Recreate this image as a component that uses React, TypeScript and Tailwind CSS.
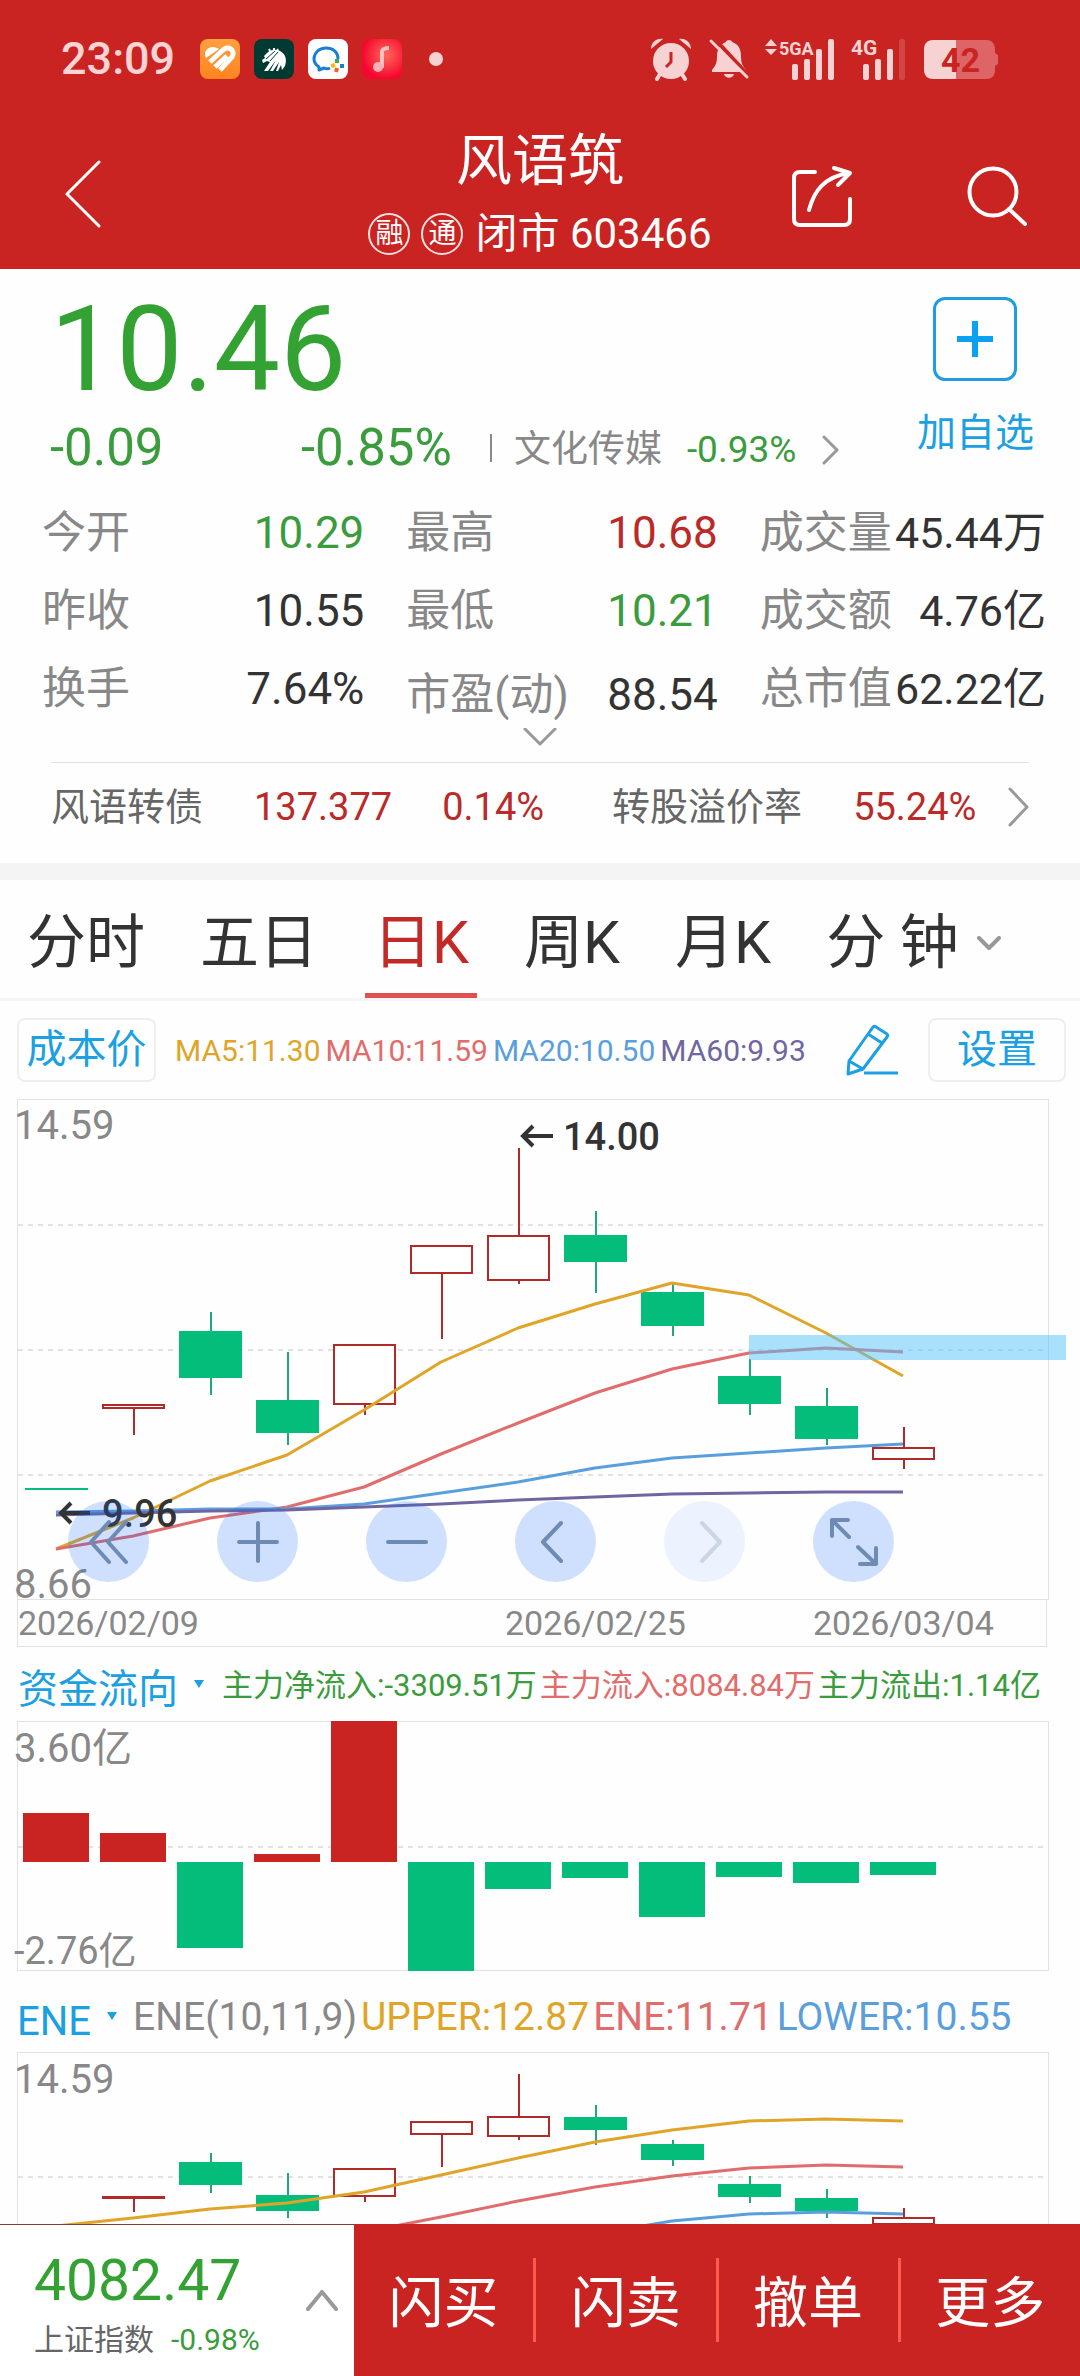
import type { ReactNode } from 'react';

const RED = '#c92322';
const GREEN = '#04bd7a';
const CANDLE_RED = '#b02a2a';

type Candle = { top: number; bottom: number; high?: number; low?: number; up?: boolean };
type Series = { color: string; points: number[] };

// Every candle takes a 77px slot, the first one is centred at 56
const slotX = (i: number) => 56 + i * 77;

const dayCandles: Candle[] = [
  { top: 389, bottom: 391 },
  { top: 306, bottom: 309, low: 336, up: true },
  { top: 232, bottom: 279, high: 213, low: 296 },
  { top: 301, bottom: 334, high: 253, low: 346 },
  { top: 246, bottom: 305, low: 316, up: true },
  { top: 147, bottom: 174, low: 240, up: true },
  { top: 137, bottom: 181, high: 49, low: 185, up: true },
  { top: 136, bottom: 163, high: 112, low: 194 },
  { top: 193, bottom: 227, high: 185, low: 237 },
  { top: 277, bottom: 305, high: 260, low: 316 },
  { top: 307, bottom: 340, high: 289, low: 346 },
  { top: 349, bottom: 360, high: 328, low: 370, up: true },
];

const dayLines: Series[] = [
  { color: '#e0a528', points: [450, 419, 382, 356, 311, 263, 229, 205, 184, 196, 234, 277] },
  { color: '#e16c6c', points: [450, 437, 419, 408, 388, 355, 324, 294, 270, 254, 249, 253] },
  { color: '#5a9fdc', points: [413, 412, 410, 410, 405, 394, 383, 369, 359, 354, 349, 345] },
  { color: '#70659f', points: [416, 414, 412, 411, 408, 405, 401, 398, 395, 394, 393, 393] },
];

const eneCandles: Candle[] = [
  { top: 186, bottom: 188 },
  { top: 145, bottom: 146, low: 160, up: true },
  { top: 110, bottom: 133, high: 101, low: 141 },
  { top: 143, bottom: 159, high: 121, low: 166 },
  { top: 117, bottom: 144, low: 150, up: true },
  { top: 70, bottom: 82, low: 115, up: true },
  { top: 65, bottom: 84, high: 22, low: 88, up: true },
  { top: 65, bottom: 78, high: 53, low: 93 },
  { top: 92, bottom: 108, high: 88, low: 114 },
  { top: 132, bottom: 145, high: 124, low: 151 },
  { top: 146, bottom: 159, high: 137, low: 166 },
  { top: 166, bottom: 172, high: 156, low: 177, up: true },
];

const eneLines: Series[] = [
  { color: '#e0a528', points: [174, 166, 157, 151, 140, 123, 106, 90, 78, 69, 67, 69] },
  { color: '#e16c6c', points: [236, 222, 208, 194, 180, 165, 149, 135, 124, 116, 113, 115] },
  { color: '#5a9fdc', points: [244, 240, 236, 230, 222, 210, 196, 182, 169, 162, 160, 162] },
];

// y of the free end of each bar, the zero line is at 141
const FLOW_ZERO = 141;
const flowBars = [92, 112, 227, 133, 0, 250, 168, 157, 196, 156, 162, 154];

const quotes = [
  { label: '今开', value: '10.29', color: 'text-[#3a9c3c]' },
  { label: '最高', value: '10.68', color: 'text-[#b92a28]' },
  { label: '成交量', value: '45.44万', color: 'text-[#333333]' },
  { label: '昨收', value: '10.55', color: 'text-[#333333]' },
  { label: '最低', value: '10.21', color: 'text-[#3a9c3c]' },
  { label: '成交额', value: '4.76亿', color: 'text-[#333333]' },
  { label: '换手', value: '7.64%', color: 'text-[#333333]' },
  { label: '市盈(动)', value: '88.54', color: 'text-[#333333]' },
  { label: '总市值', value: '62.22亿', color: 'text-[#333333]' },
];

const tabs = ['分时', '五日', '日K', '周K', '月K'];

function Chevron({ className, d, viewBox, width = 3 }: { className: string; d: string; viewBox: string; width?: number }) {
  return (
    <svg className={className} viewBox={viewBox} fill="none" stroke="currentColor" strokeWidth={width} strokeLinecap="round" strokeLinejoin="round">
      <path d={d} />
    </svg>
  );
}

function AppBadges() {
  return (
    <div className="flex items-center gap-[14px]">
      <svg className="size-10" viewBox="0 0 40 40">
        <defs>
          <linearGradient id="orange" x1="0" y1="0" x2="0" y2="1">
            <stop offset="0" stopColor="#ffa040" />
            <stop offset="1" stopColor="#ff8420" />
          </linearGradient>
        </defs>
        <rect width="40" height="40" rx="8" fill="url(#orange)" />
        <path d="M6 19c-3-6 1-11 7-11 2 0 4 1 6 2z" fill="#fff" />
        <path d="M10 23 23 11c5-5 13 0 9 7L20 31" fill="none" stroke="#fff" strokeWidth="5" />
        <path d="M15 28 27 17" stroke="#fff" strokeWidth="5" />
      </svg>
      <svg className="size-10" viewBox="0 0 40 40">
        <rect width="40" height="40" rx="8" fill="#003a33" />
        <path d="M13 14c4-4 9-4 13-2 6 3 7 9 5 15l-3 4-1-5-3 6h-2l3-9-6 9h-3l6-11-8 11H10l6-9-3-1-4 2-1-3 3-2-1-2z" fill="#fff" />
        <path d="M15 10l1 2M20 9v3M24 10l-1 2" stroke="#fff" strokeWidth="2" />
        <path d="M12 20l9-8M16 22l8-9" stroke="#003a33" />
      </svg>
      <svg className="size-10" viewBox="0 0 40 40" fill="none">
        <rect width="40" height="40" rx="8" fill="#fff" />
        <path d="M30 20c0-7-5-11-12-11S6 14 6 20c0 3 2 6 5 8v3l5-2c2 1 4 1 6 0" stroke="#1a7fd4" strokeWidth="3" strokeLinejoin="round" />
        <path d="M29 20v4" stroke="#3cb034" strokeWidth="4" />
        <path d="M23 27l4-1" stroke="#fbb80f" strokeWidth="4" />
        <path d="M28 33l1-4" stroke="#f0602b" strokeWidth="4" />
        <path d="M32 27h4" stroke="#1a7fd4" strokeWidth="4" />
      </svg>
      <svg className="size-10" viewBox="0 0 40 40">
        <defs>
          <radialGradient id="music" cx="0.6" cy="0.4" r="0.6">
            <stop offset="0" stopColor="#ff6a5a" />
            <stop offset="1" stopColor="#f5062f" />
          </radialGradient>
        </defs>
        <rect width="40" height="40" rx="8" fill="url(#music)" />
        <path d="M20 29V13c0-3 3-4 7-4" fill="none" stroke="#ffc0c0" strokeWidth="4" />
        <circle cx="16" cy="28" r="5" fill="#ffb0b4" />
      </svg>
    </div>
  );
}

function StatusIcons() {
  return (
    <svg className="h-[44px] w-[350px]" viewBox="650 37 350 44" fill="#f6d2d3">
      {/* alarm */}
      <circle cx="671" cy="61" r="18" />
      <path d="M651 49c0-6 5-11 12-10zM691 49c0-6-5-11-12-10z" />
      <path d="M660 74l-3 5M682 74l3 5" stroke="#f6d2d3" strokeWidth="4" strokeLinecap="round" />
      <path d="M671 52v10l-5 5" fill="none" stroke={RED} strokeWidth="3" />
      {/* muted bell */}
      <path d="M729 40c2 0 3 1 3 2 7 2 9 8 9 14 0 8 2 10 5 14v2h-34v-2c3-4 5-6 5-14 0-6 3-12 9-14 0-1 1-2 3-2zM724 74h10c-1 5-9 5-10 0z" />
      <path d="M712 36l37 40" stroke={RED} strokeWidth="4" />
      <path d="M711 41l36 36" stroke="#f6d2d3" strokeWidth="3" strokeLinecap="round" />
      {/* first sim */}
      <path d="M765 46l6-7 6 7zM765 49l6 6 6-6z" />
      <text x="779" y="55" fontSize="18" fontWeight="700">5GA</text>
      <rect x="792" y="64" width="6" height="16" rx="2" />
      <rect x="804" y="59" width="6" height="21" rx="2" />
      <rect x="816" y="49" width="6" height="31" rx="2" />
      <rect x="828" y="39" width="6" height="41" rx="2" />
      {/* second sim */}
      <text x="851" y="55" fontSize="21" fontWeight="700">4G</text>
      <rect x="863" y="64" width="6" height="16" rx="2" />
      <rect x="875" y="59" width="6" height="21" rx="2" />
      <rect x="887" y="49" width="6" height="31" rx="2" />
      <rect x="899" y="39" width="6" height="41" rx="2" opacity="0.2" />
      {/* battery */}
      <path d="M956 40h31c5 0 8 4 8 9v4l3 2v9l-3 2v4c0 5-3 9-8 9h-31z" fill="#de6566" />
      <path d="M956 40h-23c-6 0-9 4-9 9v21c0 5 3 9 9 9h23z" />
      <text x="941" y="72" fontSize="34" fontWeight="700" fill={RED}>42</text>
    </svg>
  );
}

function Header() {
  return (
    <header className="bg-[#c92322] text-white">
      <div className="flex h-[118px] items-center pr-[80px] pl-[61px]">
        <span className="w-[139px] text-[45px] font-medium text-[#fdd3d3]">23:09</span>
        <AppBadges />
        <span className="ml-[27px] size-[14px] rounded-full bg-[#f6d2d3]" />
        <div className="ml-auto">
          <StatusIcons />
        </div>
      </div>
      <div className="grid h-[151px] grid-cols-[1fr_auto_1fr] items-center">
        <button type="button" aria-label="返回" className="ml-[64px] w-[38px]">
          <Chevron className="h-[68px] w-[38px]" viewBox="0 0 38 68" d="M35 2 3 34l32 32" />
        </button>
        <div className="pt-1 text-center">
          <h1 className="text-[56px] leading-[76px]">风语筑</h1>
          <div className="flex h-[70px] items-center justify-center text-[42px]">
            <span className="flex size-[42px] items-center justify-center rounded-full border-2 border-[#fbe0e0] text-[28px]">融</span>
            <span className="mr-3 ml-[11px] flex size-[42px] items-center justify-center rounded-full border-2 border-[#fbe0e0] text-[28px]">通</span>
            <span>闭市 603466</span>
          </div>
        </div>
        <div className="flex items-center justify-end gap-[114px] pt-1 pr-[53px]">
          <button type="button" aria-label="分享">
            <svg className="size-[62px]" viewBox="0 0 62 62" fill="none" stroke="currentColor" strokeWidth="4" strokeLinecap="round" strokeLinejoin="round">
              <path d="M24 7H9C5 7 3 9 3 13v41c0 4 2 6 6 6h44c4 0 6-2 6-6V34" />
              <path d="M18 45C23 26 33 12 58 8M43 3l16 5-12 12" />
            </svg>
          </button>
          <button type="button" aria-label="搜索">
            <svg className="size-[60px]" viewBox="0 0 60 60" fill="none" stroke="currentColor" strokeWidth="4" strokeLinecap="round">
              <circle cx="26" cy="26" r="23.5" />
              <path d="M42 43l16 15" />
            </svg>
          </button>
        </div>
      </div>
    </header>
  );
}

function QuotePanel() {
  return (
    <section>
      <div className="flex justify-between">
        <div className="pt-[22px] pl-[50px]">
          <div className="text-[118px] leading-[118px] text-[#33a233]">10.46</div>
          <div className="flex h-[78px] items-center text-[51px] text-[#3a9c3c]">
            <span className="w-[251px]">-0.09</span>
            <span>-0.85%</span>
            <span className="ml-[38px] h-7 w-[2px] bg-[#888888]" />
            <a href="#sector" className="ml-[22px] flex items-center pt-1 text-[37px]">
              <span className="text-[#888888]">文化传媒</span>
              <span className="ml-[25px]">-0.93%</span>
              <Chevron className="ml-[26px] h-[30px] w-[18px] text-[#999999]" viewBox="0 0 18 30" d="M2 2l13 13L2 28" />
            </a>
          </div>
        </div>
        <button type="button" className="mt-7 mr-[46px] flex flex-col items-center self-start text-[39px] text-[#1ba0e2]">
          <span className="flex size-[84px] items-center justify-center rounded-xl border-[3px] border-[#1f9ddd]">
            <svg className="size-9" viewBox="0 0 36 36" stroke="#0aa2f0" strokeWidth="6">
              <path d="M18 0v36M0 18h36" />
            </svg>
          </span>
          <span className="mt-[27px] leading-[50px]">加自选</span>
        </button>
      </div>

      <dl className="mt-[7px] grid grid-cols-[322fr_311fr_286fr] gap-x-[42px] pr-[34px] pl-[42px] text-[44px]">
        {quotes.map((q, i) => (
          <div key={q.label} className={`flex h-[78px] items-center justify-between whitespace-nowrap ${i === 7 ? 'pt-3' : ''}`}>
            <dt className="text-[#888888]">{q.label}</dt>
            <dd className={`${q.color} ${i % 3 === 2 ? 'text-[43px]' : ''}`}>{q.value}</dd>
          </div>
        ))}
      </dl>
      <button type="button" aria-label="展开" className="mx-auto block text-[#999999]">
        <Chevron className="h-[18px] w-[34px]" viewBox="0 0 34 18" d="M2 1l15 15L32 1" />
      </button>

      <div className="mx-[51px] mt-4 border-t border-[#e2e2e2] pb-3">
        <a href="#bond" className="flex h-[88px] items-center text-[38px] whitespace-nowrap text-[#b92a28]">
          <span className="text-[#666666]">风语转债</span>
          <span className="ml-[51px]">137.377</span>
          <span className="ml-[50px]">0.14%</span>
          <span className="ml-[68px] text-[#666666]">转股溢价率</span>
          <span className="ml-[51px]">55.24%</span>
          <Chevron className="ml-auto h-[40px] w-[21px] text-[#999999]" viewBox="0 0 21 40" d="M2 2l17 18L2 38" />
        </a>
      </div>
    </section>
  );
}

function PeriodTabs() {
  return (
    <nav className="flex h-[121px] gap-[55px] border-b-[3px] border-[#f4f4f4] pl-[27px] text-[59px] text-[#333333]">
      {tabs.map((tab) => (
        <button
          key={tab}
          type="button"
          className={`relative h-full pt-2 ${tab === '日K' ? 'text-[#c22a28]' : ''}`}
        >
          {tab}
          {tab === '日K' && <span className="absolute -inset-x-2 bottom-0 h-[5px] bg-[#e05050]" />}
        </button>
      ))}
      <button type="button" className="flex h-full items-center pt-2">
        分 钟
        <Chevron className="ml-[18px] h-[14px] w-6 text-[#999999]" viewBox="0 0 24 14" d="M2 2l10 10L22 2" width={4} />
      </button>
    </nav>
  );
}

function ChartToolbar() {
  return (
    <div className="flex h-[98px] items-center pr-[14px] pl-[17px] text-[30px] whitespace-nowrap">
      <button type="button" className="h-16 w-[139px] rounded-lg border-2 border-[#eeeeee] text-[40px] text-[#1ba0e2]">成本价</button>
      <div className="ml-[19px] flex gap-[5px]">
        <span className="text-[#e0a528]">MA5:11.30</span>
        <span className="text-[#e16c6c]">MA10:11.59</span>
        <span className="text-[#5a9fdc]">MA20:10.50</span>
        <span className="text-[#70659f]">MA60:9.93</span>
      </div>
      <button type="button" aria-label="画线" className="mr-[30px] ml-auto">
        <svg className="size-[52px]" viewBox="0 0 52 52" fill="none" stroke="#1ba0e2" strokeWidth="3" strokeLinejoin="round">
          <path d="M2 50l1-13L27 3c1-1 2-1 3 0l11 7c1 1 1 2 0 3L17 45z" />
          <path d="M22 10l14 9M3 37l14 8" />
          <path d="M18 49h34" />
        </svg>
      </button>
      <button type="button" className="h-16 w-[138px] rounded-lg border-2 border-[#eeeeee] text-[40px] text-[#1ba0e2]">设置</button>
    </div>
  );
}

function Frame({ height, grid }: { height: number; grid: number[] }) {
  return (
    <g fill="none" stroke="#e2e2e2">
      <rect x="17.5" y="0.5" width="1031" height={height - 1} />
      {grid.map((y) => (
        <path key={y} d={`M18 ${y}H1048`} strokeWidth="2" strokeDasharray="5 5" />
      ))}
    </g>
  );
}

function Candles({ data }: { data: Candle[] }) {
  return (
    <g strokeWidth="2">
      {data.map((c, i) => {
        const x = slotX(i);
        const color = c.up ? CANDLE_RED : '#1fa878';
        return (
          <g key={i} stroke={color}>
            {c.high !== undefined && <path d={`M${x + 1} ${c.high}V${c.top}`} />}
            {c.low !== undefined && <path d={`M${x + 1} ${c.bottom}V${c.low}`} />}
            {c.up ? (
              <rect x={x - 30} y={c.top} width="61" height={c.bottom - c.top} fill="#fff" />
            ) : (
              <rect x={x - 31} y={c.top} width="63" height={c.bottom - c.top} fill={GREEN} stroke="none" />
            )}
          </g>
        );
      })}
    </g>
  );
}

function Lines({ data }: { data: Series[] }) {
  return (
    <g fill="none" strokeWidth="3" strokeLinejoin="round">
      {data.map((s) => (
        <polyline key={s.color} stroke={s.color} points={s.points.map((y, i) => `${slotX(i)},${y}`).join(' ')} />
      ))}
    </g>
  );
}

function RoundButton({ label, disabled, children }: { label: string; disabled?: boolean; children: ReactNode }) {
  return (
    <button
      type="button"
      aria-label={label}
      disabled={disabled}
      className="flex size-[81px] items-center justify-center rounded-full bg-[#0f69ff]/20 disabled:opacity-35"
    >
      <svg className="size-[50px]" viewBox="0 0 50 50" fill="none" stroke="#6d8bb3" strokeWidth="4" strokeLinecap="round" strokeLinejoin="round">
        {children}
      </svg>
    </button>
  );
}

function DayChart() {
  return (
    <div className="relative">
      <svg className="block w-full" viewBox="0 0 1080 501">
        <Frame height={501} grid={[126, 251, 376]} />
        <g fill="#888888" fontSize="40">
          <text x="14" y="40">14.59</text>
          <text x="14" y="499">8.66</text>
        </g>
        <Candles data={dayCandles} />
        <Lines data={dayLines} />
        <rect x="749" y="236" width="317" height="25" fill="#53c3fb" fillOpacity="0.5" />
        <g fill="#333333" fontSize="38" fontWeight="500">
          <text x="563" y="51">14.00</text>
          <text x="102" y="428">9.96</text>
        </g>
        <path d="M553 37h-30m10-10-10 10 10 10M90 414H61m10-10-10 10 10 10" fill="none" stroke="#333333" strokeWidth="4" />
      </svg>
      <div className="absolute bottom-[18px] left-[68px] flex gap-[68px]">
        <RoundButton label="最早">
          <path d="M25 5 7 25l18 20M42 5 24 25l18 20" />
        </RoundButton>
        <RoundButton label="放大">
          <path d="M25 6v38M6 25h38" />
        </RoundButton>
        <RoundButton label="缩小">
          <path d="M6 25h38" />
        </RoundButton>
        <RoundButton label="向左">
          <path d="M30 6 12 25l18 19" />
        </RoundButton>
        <RoundButton label="向右" disabled>
          <path d="M22 6l18 19-18 19" />
        </RoundButton>
        <RoundButton label="全屏">
          <path d="M20 20 3 3m0 16V3h16M29 30l18 17M47 31v16H31" />
        </RoundButton>
      </div>
    </div>
  );
}

function IndicatorButton({ name }: { name: string }) {
  return (
    <button type="button" className="flex items-center pt-2 text-[40px] text-[#1ba0e2]">
      {name}
      <svg className="mb-3 ml-[16px] h-2 w-[10px]" viewBox="0 0 10 8" fill="currentColor">
        <path d="M0 0h10L5 8z" />
      </svg>
    </button>
  );
}

function FlowChart() {
  return (
    <section>
      <div className="flex h-[74px] items-center pt-1 pl-[18px] text-[31px] whitespace-nowrap">
        <IndicatorButton name="资金流向" />
        <div className="ml-[18px] flex gap-[3px]">
          <span className="text-[#3a9c3c]">主力净流入:-3309.51万</span>
          <span className="text-[#e16c6c]">主力流入:8084.84万</span>
          <span className="text-[#3a9c3c]">主力流出:1.14亿</span>
        </div>
      </div>
      <svg className="block w-full" viewBox="0 0 1080 250">
        <Frame height={250} grid={[126]} />
        {flowBars.map((y, i) => (
          <rect
            key={i}
            x={slotX(i) - 33}
            y={Math.min(y, FLOW_ZERO)}
            width="66"
            height={Math.abs(y - FLOW_ZERO)}
            fill={y < FLOW_ZERO ? RED : GREEN}
          />
        ))}
        <g fill="#888888">
          <text x="14" y="41" fontSize="40">3.60亿</text>
          <text x="14" y="243" fontSize="38">-2.76亿</text>
        </g>
      </svg>
    </section>
  );
}

function EneChart() {
  return (
    <section>
      <div className="flex h-[81px] items-center pt-3 pl-[17px] text-[39px] whitespace-nowrap">
        <IndicatorButton name="ENE" />
        <div className="ml-[16px] flex gap-1">
          <span className="text-[#888888]">ENE(10,11,9)</span>
          <span className="text-[#e0a528]">UPPER:12.87</span>
          <span className="text-[#e16c6c]">ENE:11.71</span>
          <span className="text-[#5a9fdc]">LOWER:10.55</span>
        </div>
      </div>
      <svg className="block w-full" viewBox="0 0 1080 250">
        <Frame height={250} grid={[125]} />
        <text x="14" y="41" fill="#888888" fontSize="40">14.59</text>
        <Candles data={eneCandles} />
        <Lines data={eneLines} />
      </svg>
    </section>
  );
}

function TradeBar() {
  return (
    <footer className="flex h-[152px] shrink-0 bg-[#c92322]">
      <button type="button" className="flex w-[354px] items-center justify-between border-t border-[#8e3a33] bg-white pr-4 pl-[34px] text-left">
        <span className="pt-2">
          <span className="block text-[57px] leading-[66px] text-[#33a233]">4082.47</span>
          <span className="mt-1 flex gap-[17px] text-[30px] leading-[44px] text-[#3a9c3c]">
            <span className="text-[#666666]">上证指数</span>
            <span>-0.98%</span>
          </span>
        </span>
        <Chevron className="h-[21px] w-8 text-[#999999]" viewBox="0 0 32 21" d="M2 19 16 2l14 17" width={4} />
      </button>
      <div className="flex flex-1 items-center text-[55px] text-white">
        {['闪买', '闪卖', '撤单', '更多'].map((name, i) => (
          <button
            key={name}
            type="button"
            className={`h-[84px] flex-1 pt-1 ${i < 3 ? 'border-r-[3px] border-[#ff5a50]' : ''}`}
          >
            {name}
          </button>
        ))}
      </div>
    </footer>
  );
}

export default function App() {
  return (
    <div className="flex h-screen flex-col bg-[#fefefe] font-[Roboto,'Noto_Sans_CJK_SC',sans-serif]">
      <Header />
      <main className="min-h-0 flex-1 overflow-hidden">
        <QuotePanel />
        <div className="h-[17px] bg-[#f4f4f4]" />
        <PeriodTabs />
        <ChartToolbar />
        <DayChart />
        <div className="mr-[33px] ml-[17px] flex h-[47px] items-center border-x border-b border-[#e2e2e2] text-[34px] text-[#888888]">
          <span>2026/02/09</span>
          <span className="ml-[306px]">2026/02/25</span>
          <span className="ml-[127px]">2026/03/04</span>
        </div>
        <FlowChart />
        <EneChart />
      </main>
      <TradeBar />
    </div>
  );
}
